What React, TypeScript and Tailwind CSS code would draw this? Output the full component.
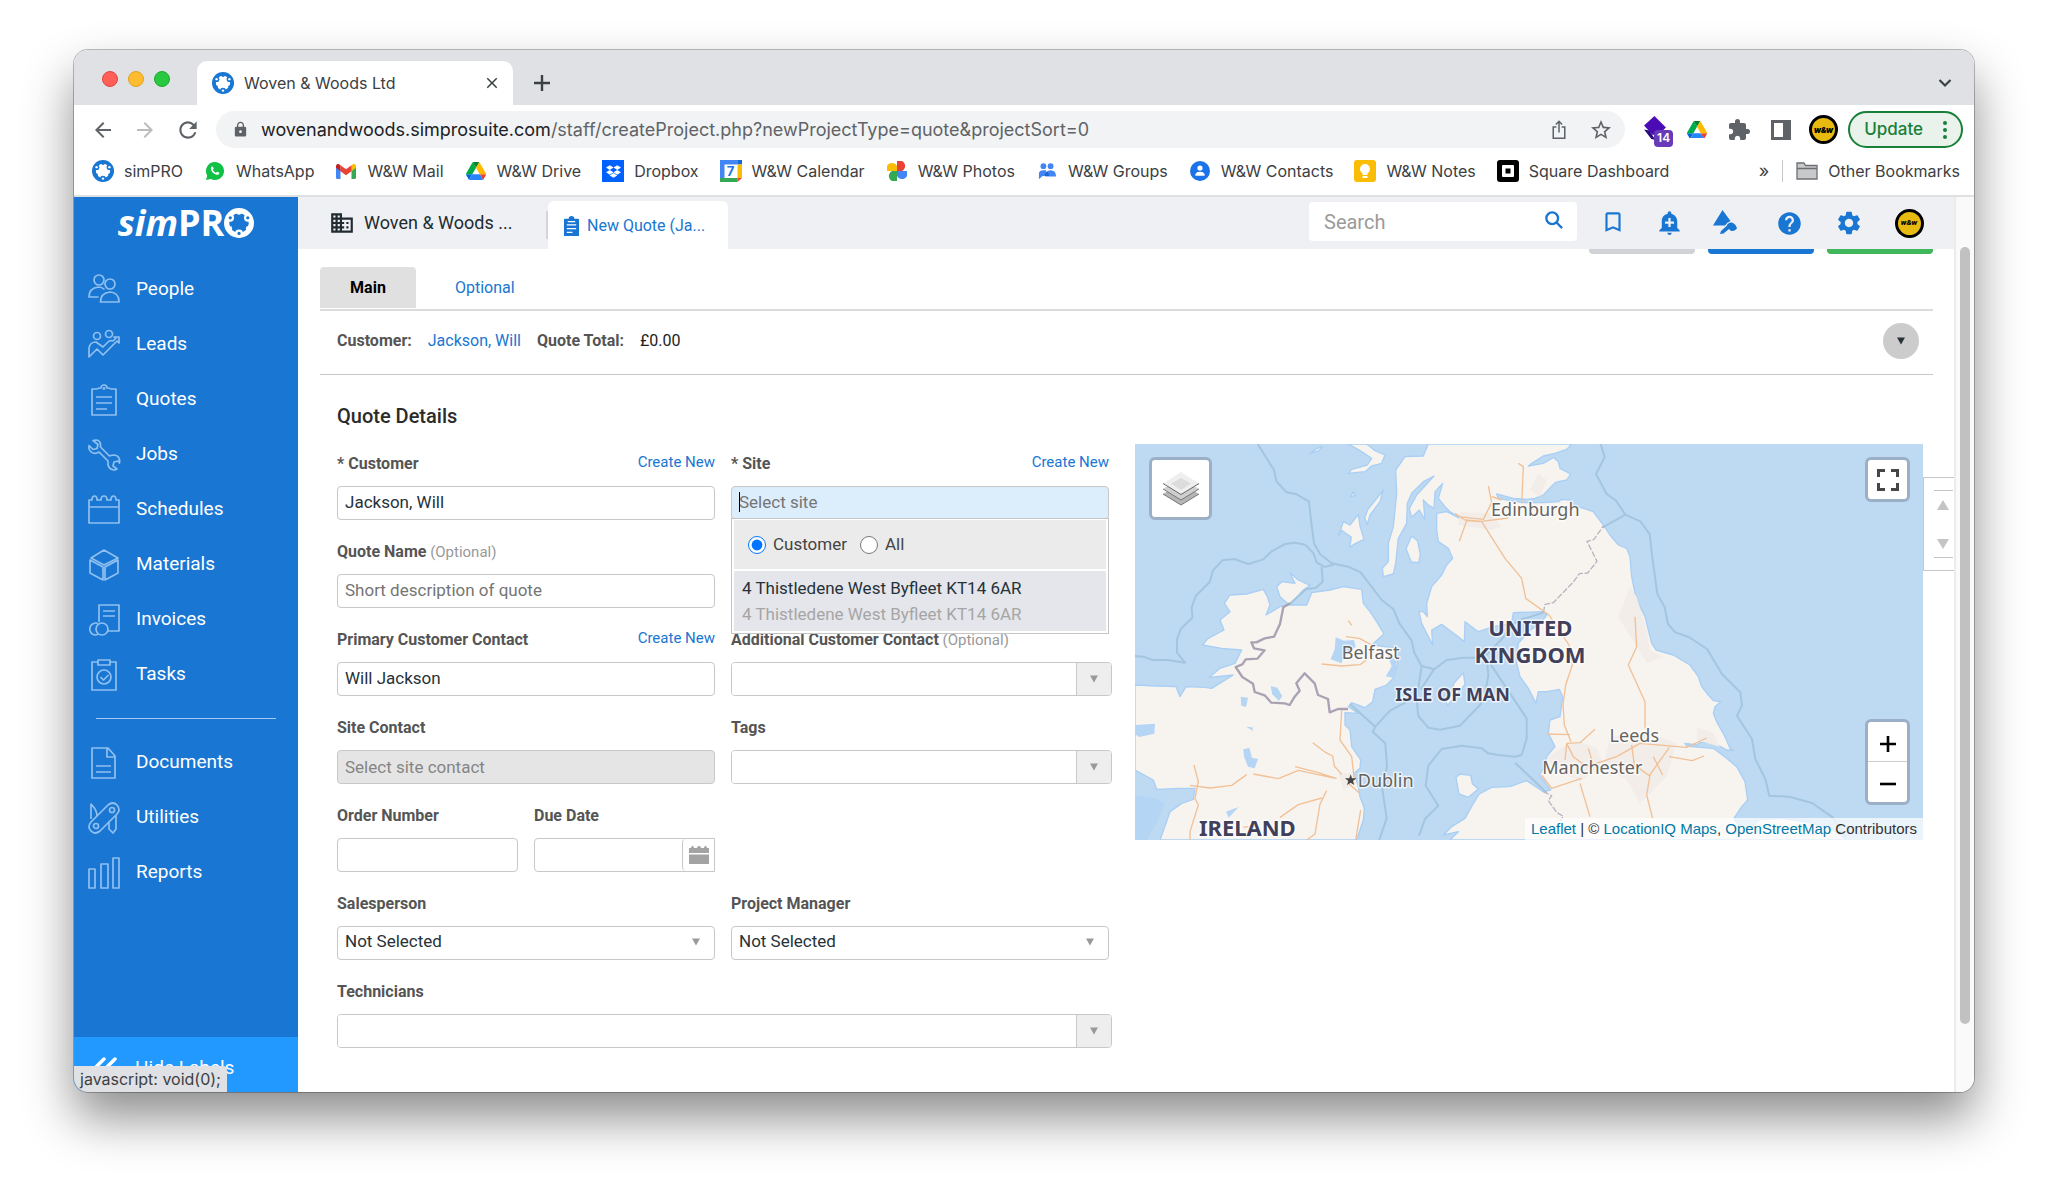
import { useState } from 'react';
import type { ReactNode } from 'react';
import { FaDropbox } from 'react-icons/fa';
import {
  MdAddAlert,
  MdArrowBack,
  MdArrowForward,
  MdBookmarkBorder,
  MdClose,
  MdDomain,
  MdExtension,
  MdHelp,
  MdLock,
  MdRefresh,
  MdSettings,
  MdStarBorder,
} from 'react-icons/md';

/* ---------- brand marks ---------- */

function SimproMark({ ring, core }: { ring: string; core: string }) {
  return (
    <svg viewBox="0 0 24 24" className="size-full" aria-hidden="true">
      <circle cx="12" cy="12" r="12" fill={ring} />
      <circle cx="12" cy="12" r="7.800" fill={core} />
      <g fill={ring}>
        <circle cx="4.800" cy="7.800" r="3.200" />
        <circle cx="19.200" cy="7.800" r="3.200" />
        <circle cx="12" cy="20.300" r="3.200" />
        <circle cx="12" cy="3.500" r="1.900" />
        <circle cx="4.600" cy="16.300" r="1.900" />
        <circle cx="19.400" cy="16.300" r="1.900" />
      </g>
      <g fill={core}>
        <circle cx="5" cy="7.800" r="1.300" />
        <circle cx="19" cy="7.800" r="1.300" />
        <circle cx="12" cy="20.300" r="1.300" />
      </g>
    </svg>
  );
}

const GmailMark = () => (
  <svg viewBox="0 0 20 15" className="w-5" aria-hidden="true">
    <path d="M0 2v11.500Q0 15 1.500 15H4.500V5z" fill="#4285f4" />
    <path d="M20 2v11.500Q20 15 18.500 15H15.500V5z" fill="#34a853" />
    <path d="M15.500 1.200V7.200L20 3.800V2Q19.500-.8 17 .2z" fill="#fbbc04" />
    <path d="M4.500 7.200V1.200L10 5.300l5.500-4.100v6L10 11.300z" fill="#ea4335" />
    <path d="M4.500 7.200V1.200L3 .2Q.5-.8 0 2v1.800z" fill="#c5221f" />
  </svg>
);

const DriveMark = () => (
  <svg viewBox="0 0 87 78" className="w-5" aria-hidden="true">
    <path d="M6.600 66.900l3.800 6.600c.8 1.400 2 2.500 3.300 3.300L27.500 53H0c0 1.500.4 3.100 1.200 4.500z" fill="#0066da" />
    <path d="M43.700 25L29.900 1.200c-1.300.8-2.500 1.900-3.300 3.300L1.200 48.500A9 9 0 000 53h27.500z" fill="#00ac47" />
    <path d="M73.600 76.800c1.300-.8 2.500-1.900 3.300-3.300L86.100 57.500c.8-1.400 1.200-3 1.200-4.500H59.800l5.900 11.500z" fill="#ea4335" />
    <path d="M43.700 25L57.400 1.200C56.100.4 54.500 0 52.900 0H34.400c-1.600 0-3.200.4-4.500 1.200z" fill="#00832d" />
    <path d="M59.800 53H27.500L13.700 76.800c1.300.8 2.900 1.200 4.500 1.200h50.900c1.600 0 3.200-.4 4.500-1.200z" fill="#2684fc" />
    <path d="M73.400 26.500L60.700 4.500c-.8-1.400-2-2.500-3.300-3.300L43.700 25l16.100 28h27.500c0-1.500-.4-3.100-1.200-4.500z" fill="#ffba00" />
  </svg>
);

const CalendarMark = () => (
  <span className="relative flex size-[22px] items-center justify-center bg-white text-[13px] font-bold leading-none text-[#1a73e8]">
    <svg viewBox="0 0 22 22" className="absolute inset-0" aria-hidden="true">
      <path d="M0 0h18v4.500H4.500V18H0z" fill="#4285f4" />
      <path d="M18 0h4v4.500h-4z" fill="#1967d2" />
      <path d="M17.500 4.500H22V18h-4.500z" fill="#fbbc04" />
      <path d="M0 18h17.500v4H0z" fill="#34a853" />
      <path d="M17.500 18H22l-4.500 4z" fill="#ea4335" />
    </svg>
    <span className="relative">7</span>
  </span>
);

const PhotosMark = () => (
  <svg viewBox="0 0 20 20" className="w-5" aria-hidden="true">
    <path d="M10 0v10h5A5 5 0 0010 0z" fill="#ea4335" />
    <path d="M20 10H10v5a5 5 0 0010-5z" fill="#4285f4" />
    <path d="M10 20V10H5a5 5 0 005 10z" fill="#34a853" />
    <path d="M0 10h10V5A5 5 0 000 10z" fill="#fbbc04" />
  </svg>
);

const GroupsMark = () => (
  <svg viewBox="0 0 20 18" className="w-[18px]" aria-hidden="true">
    <circle cx="6" cy="3.500" r="3.200" fill="#4285f4" />
    <circle cx="14" cy="3.500" r="3.200" fill="#4285f4" />
    <path d="M1 18v-6q0-4 5-4h3v6.500H5z" fill="#4285f4" />
    <path d="M8 15q0-7 6-7t6 7z" fill="#4285f4" />
    <path d="M7.500 14.500q.5-3.500 2.500-5 2 1.500 2.500 5z" fill="#1967d2" />
  </svg>
);

const ContactsMark = () => (
  <svg viewBox="0 0 20 20" className="w-5" aria-hidden="true">
    <circle cx="10" cy="10" r="10" fill="#1a73e8" />
    <circle cx="10" cy="7" r="2.600" fill="#fff" />
    <path d="M5.200 14.800q0-4 4.800-4t4.800 4z" fill="#fff" />
  </svg>
);

const NotesMark = () => (
  <svg viewBox="0 0 22 22" className="w-[22px]" aria-hidden="true">
    <rect width="22" height="22" rx="3" fill="#fbbc04" />
    <circle cx="11" cy="9" r="5" fill="#fff" />
    <path d="M8.500 12h5v3h-5zM8.500 16h5v2h-5z" fill="#fff" />
  </svg>
);

const SquareMark = () => (
  <svg viewBox="0 0 22 22" className="w-[22px]" aria-hidden="true">
    <rect width="22" height="22" rx="3" fill="#000" />
    <rect x="5" y="5" width="12" height="12" rx="1" fill="#fff" />
    <rect x="8.500" y="8.500" width="5" height="5" fill="#000" />
  </svg>
);

function Avatar() {
  return (
    <span className="flex size-[29px] items-center justify-center rounded-full border-3 border-black bg-[#e8b90e] text-[8px] font-black italic leading-none text-black">
      w&amp;w
    </span>
  );
}

/* ---------- browser chrome ---------- */

const bookmarks: { label: string; icon: ReactNode }[] = [
  { label: 'simPRO', icon: <span className="size-[22px]"><SimproMark ring="#1976d2" core="#fff" /></span> },
  {
    label: 'WhatsApp',
    icon: (
      <svg viewBox="0 0 18 18" className="w-[18px]" aria-hidden="true">
        <path d="M9 0a9 9 0 11-4.300 16.900L0 18l1.200-4.500A9 9 0 019 0z" fill="#0fc144" />
        <path d="M5.800 4.600c-2 1.500-.5 4.600 1.500 6.400s4.800 2.700 6 .6c.4-.8 0-1-2-1.900-.8 0-.8 1.200-1.600 1-1.300-.6-2.200-1.500-2.800-2.700 0-.7 1-1 .8-1.600-.7-1.700-.9-2-1.900-1.800z" fill="#fff" />
      </svg>
    ),
  },
  { label: 'W&W Mail', icon: <GmailMark /> },
  { label: 'W&W Drive', icon: <DriveMark /> },
  {
    label: 'Dropbox',
    icon: <span className="flex size-[22px] items-center justify-center bg-[#0061ff] text-white"><FaDropbox size={15} /></span>,
  },
  { label: 'W&W Calendar', icon: <CalendarMark /> },
  { label: 'W&W Photos', icon: <PhotosMark /> },
  { label: 'W&W Groups', icon: <GroupsMark /> },
  { label: 'W&W Contacts', icon: <ContactsMark /> },
  { label: 'W&W Notes', icon: <NotesMark /> },
  { label: 'Square Dashboard', icon: <SquareMark /> },
];

function TabStrip() {
  return (
    <div className="flex h-[55px] items-end bg-[#dfe1e5] pr-[22px]">
      <div className="flex h-full w-[123px] items-center gap-[10px] pl-7 pt-[2px]">
        <span className="size-4 rounded-full border border-[#e0443e] bg-[#ff5f57]" />
        <span className="size-4 rounded-full border border-[#dea123] bg-[#febc2e]" />
        <span className="size-4 rounded-full border border-[#1aab29] bg-[#28c840]" />
      </div>
      <div className="flex h-11 w-[316px] items-center rounded-t-[10px] bg-white pl-[15px] pr-3">
        <span className="size-[22px]"><SimproMark ring="#1976d2" core="#fff" /></span>
        <span className="ml-[10px] flex-1 text-base text-[#3c4043]">Woven &amp; Woods Ltd</span>
        <button aria-label="Close tab" className="text-[#3c4043]"><MdClose size={18} /></button>
      </div>
      <button aria-label="New tab" className="mb-[13px] ml-5 text-[#3c4043]">
        <svg viewBox="0 0 18 18" className="w-[18px]"><path d="M9 1v16M1 9h16" stroke="currentColor" strokeWidth="2.400" /></svg>
      </button>
      <button aria-label="Search tabs" className="mb-[17px] ml-auto text-[#3c4043]">
        <svg viewBox="0 0 14 10" className="w-[14px]"><path d="M1.500 2l5.500 5.500L12.500 2" fill="none" stroke="currentColor" strokeWidth="2.200" /></svg>
      </button>
    </div>
  );
}

function AddressBar() {
  return (
    <div className="flex h-[49px] items-center bg-white pl-[17px] pr-[11px] text-[#5f6368]">
      <button aria-label="Back"><MdArrowBack size={24} /></button>
      <button aria-label="Forward" className="ml-[18px] text-[#babcbe]"><MdArrowForward size={24} /></button>
      <button aria-label="Reload" className="ml-[18px]"><MdRefresh size={26} /></button>
      <div className="ml-[15px] flex h-[37px] flex-1 items-center rounded-full bg-[#f1f3f4] pl-4 pr-3">
        <MdLock size={17} />
        <span className="ml-3 flex-1 text-lg">
          <span className="text-[#202124]">wovenandwoods.simprosuite.com</span>/staff/createProject.php?newProjectType=quote&amp;projectSort=0
        </span>
        <button aria-label="Share" className="mr-[22px]">
          <svg viewBox="0 0 18 22" className="w-4" fill="none" stroke="currentColor" strokeWidth="1.700">
            <path d="M6 8H2.500v12.500h13V8H12M9 14V2M5.500 5L9 1.500 12.500 5" />
          </svg>
        </button>
        <button aria-label="Bookmark this tab"><MdStarBorder size={24} /></button>
      </div>
      <span className="relative ml-[18px] mr-4 size-7">
        <svg viewBox="0 0 24 24" className="w-[25px]" aria-hidden="true">
          <path d="M11 0l11 11-7 7H9L1 9z" fill="#4b0bb5" />
          <path d="M1 13l5 1 6 9-4-1z" fill="#2b0a80" />
        </svg>
        <span className="absolute left-[11px] top-[14px] flex h-[17px] w-[19px] items-center justify-center rounded-sm bg-[#673ab7] text-xs font-semibold text-white">14</span>
      </span>
      <DriveMark />
      <MdExtension size={24} className="ml-5" />
      <svg viewBox="0 0 20 20" className="ml-5 w-5" aria-hidden="true">
        <path d="M1.500 1.500h17v17h-17z" fill="none" stroke="currentColor" strokeWidth="3" />
        <path d="M12 0h8v20h-8z" fill="currentColor" />
      </svg>
      <span className="ml-[18px]"><Avatar /></span>
      <button className="ml-[10px] flex h-[37px] items-center gap-5 rounded-full border-2 border-[#188038] bg-[#e9f3ec] pl-[14px] pr-[14px] text-[17px] font-medium text-[#188038]">
        Update
        <svg viewBox="0 0 4 18" className="w-1" fill="currentColor"><circle cx="2" cy="2" r="2" /><circle cx="2" cy="9" r="2" /><circle cx="2" cy="16" r="2" /></svg>
      </button>
    </div>
  );
}

function BookmarkBar() {
  return (
    <nav className="flex h-[43px] items-center border-b-2 border-[#dfe0e2] bg-white pb-[7px] pl-[18px] pr-[14px] text-base text-[#3c4043]">
      <div className="flex flex-1 items-center gap-[21px]">
        {bookmarks.map((b) => (
          <a key={b.label} href="#" className="flex items-center gap-[10px] whitespace-nowrap">
            <span className="flex w-[22px] justify-center">{b.icon}</span>
            {b.label}
          </a>
        ))}
      </div>
      <button aria-label="More bookmarks" className="text-lg">»</button>
      <span className="mx-[13px] h-[22px] w-px bg-[#c4c7ca]" />
      <a href="#" className="flex items-center gap-[10px] whitespace-nowrap">
        <svg viewBox="0 0 22 18" className="w-[22px]" aria-hidden="true">
          <path d="M1 17V1h7l1.500 2.500H21V17z" fill="#c8c9cb" stroke="#6c6f73" strokeWidth="1.300" />
          <path d="M1 6.500h20" stroke="#6c6f73" strokeWidth="1.300" />
        </svg>
        Other Bookmarks
      </a>
    </nav>
  );
}

/* ---------- app sidebar ---------- */

const icons: Record<string, ReactNode> = {
  People: (
    <>
      <circle cx="11" cy="6" r="5" />
      <circle cx="22" cy="10" r="5" />
      <path d="M10.500 23H1q0-9 9.500-10 3.500 0 6 2.500M12.500 28q0-9 9.500-10 9 .5 9 10z" />
    </>
  ),
  Leads: (
    <>
      <circle cx="9" cy="7" r="3.500" />
      <circle cx="21" cy="5" r="3.500" />
      <path d="M1 28V19q1-6 7-6l7 5 5-5q2-2 5-1l3-3-2-1h5v6l-2-2-14 14-6-6z" />
    </>
  ),
  Quotes: (
    <>
      <path d="M4 5h5q1-1 4-1 0-3 3-3t3 3q3 0 4 1h5v26H4zM8 13h16M8 19h16M8 25h11" />
      <circle cx="16" cy="4.500" r=".6" />
    </>
  ),
  Jobs: <path d="M5 1.500l5 4-1 4-4 1-4-4Q0 12 5 14q3 1 6-1l9 9q-1 8 6 9 2 0 3-1l-4-3 1-4 4-1 1.500 2q1-7-5-8-3 0-5 1l-9-9Q13 1 8 1z" />,
  Schedules: <path d="M1 6h3q0-4 2.500-4T9 6h4q0-4 3-4t3 4h4q0-4 2.500-4T28 6h3v23H1zM1 13h30" />,
  Materials: <path d="M16 1l14 8-14 7L3 9zM2 11l13 7v13L2 24zM30 11l-13 7v13l13-7z" />,
  Invoices: (
    <>
      <path d="M11 18V1h20v26H20M15 7h12M15 12h12" />
      <path d="M10 19.500A6 6 0 107 31q2 0 3-1" />
      <circle cx="14" cy="25" r="6" />
    </>
  ),
  Tasks: (
    <>
      <path d="M10 3H4v28h24V3h-6M10 1h12v5H10z" />
      <circle cx="16" cy="18" r="7" />
      <path d="M12.500 18l3 3 5-5" />
    </>
  ),
  Documents: <path d="M4 1h16l7 8v22H4zM19 1v9h8M8 19h15M8 25h15" />,
  Utilities: (
    <>
      <path d="M3 20L20 3q5-4 9 0 4 5 0 9L12 29q-5 4-9 0-4-4 0-9zM3 17V2q6 6 6 12M21 19v8l4 4 3-4V13" />
      <circle cx="24" cy="8" r="2.500" />
      <circle cx="8" cy="24" r="2.500" />
    </>
  ),
  Reports: <path d="M1 12h6v19H1zM13 7h7v24h-7zM25 1h6v30h-6z" />,
};

function NavItem({ label }: { label: string }) {
  return (
    <a href="#" className="flex h-[55px] items-center gap-4 pl-[14px] text-[19px] text-white">
      <svg viewBox="0 0 32 32" className="size-8 overflow-visible" fill="none" stroke="#8fc0f0" strokeWidth="1.700" strokeLinejoin="round" aria-hidden="true">
        {icons[label]}
      </svg>
      {label}
    </a>
  );
}

function Sidebar() {
  return (
    <aside className="flex w-[224px] shrink-0 flex-col bg-[#1976d2] font-[Roboto,sans-serif]">
      <div className="flex h-[65px] items-start justify-center pt-[5px]">
        <div className="flex items-center font-['Open_Sans',sans-serif] text-[36px] font-bold leading-[42px] text-white">
          <span><i>sim</i>PR</span>
          <span className="size-[30px]"><SimproMark ring="#fff" core="#1976d2" /></span>
        </div>
      </div>
      <nav>
        {['People', 'Leads', 'Quotes', 'Jobs', 'Schedules', 'Materials', 'Invoices', 'Tasks'].map((l) => (
          <NavItem key={l} label={l} />
        ))}
        <hr className="mx-[22px] my-4 border-[#a3cbf2]" />
        {['Documents', 'Utilities', 'Reports'].map((l) => (
          <NavItem key={l} label={l} />
        ))}
      </nav>
      <button className="mt-auto flex h-[55px] items-center gap-4 bg-[#2299ff] pb-3 pl-[17px] pt-5 text-[19px] text-white">
        <svg viewBox="0 0 28 24" className="w-7" fill="none" stroke="#fff" strokeWidth="3.500" strokeLinecap="round" aria-hidden="true">
          <path d="M13 2L3 12l10 10M24 2L14 12l10 10" />
        </svg>
        Hide Labels
      </button>
    </aside>
  );
}

/* ---------- app header ---------- */

function Header() {
  return (
    <header className="flex h-[52px] items-start bg-[#eff0f3] pr-[15px] text-[#1976d2]">
      <a href="#" className="flex h-[52px] w-[248px] items-center gap-[9px] pl-[31px] text-lg text-[#212b30]">
        <MdDomain size={26} />
        Woven &amp; Woods ...
      </a>
      <span className="mt-[14px] h-7 w-[2px] bg-[#d3d5d9]" />
      <a href="#" className="mt-1 flex h-12 w-[180px] items-center gap-2 rounded-t-md bg-white pl-4 pt-[2px] text-base">
        <svg viewBox="0 0 16 22" className="w-[15px]" aria-hidden="true">
          <path d="M1 3h4a3 3 0 016 0h4q1 0 1 1v17q0 1-1 1H1q-1 0-1-1V4q0-1 1-1z" fill="#1976d2" />
          <path d="M3 9.500h10M3 13.500h10M3 17.500h6M4 6h8" stroke="#fff" strokeWidth="1.500" />
        </svg>
        New Quote (Ja...
      </a>
      <label className="ml-auto mr-2 mt-[5px] flex h-[39px] w-[268px] items-center rounded bg-white pl-[15px] pr-[10px]">
        <input aria-label="Search" placeholder="Search" className="w-full min-w-0 flex-1 text-xl outline-none placeholder:text-[#9a9a9a]" />
        <svg viewBox="0 0 20 20" className="mb-1 mr-1 w-[18px]" fill="none" stroke="currentColor" strokeWidth="2.600" aria-hidden="true">
          <circle cx="8" cy="8" r="6.500" />
          <path d="M12.800 12.800L19 19" />
        </svg>
      </label>
      {[
        { name: 'Bookmarks', icon: <MdBookmarkBorder size={26} /> },
        { name: 'Notifications', icon: <MdAddAlert size={27} /> },
        {
          name: 'Feedback',
          icon: (
            <svg viewBox="0 0 24 24" className="w-6" fill="currentColor">
              <path d="M9.500 0l8 11q-3.500 1-5.500 4.500H0z" />
              <path d="M13.500 16q1.500-4 5.500-3.500 4 1.500 5 6-2.500 3-6 2.500l-2-2-5.500 4.500-3.500.5 1-3z" />
            </svg>
          ),
        },
      ].map((i) => (
        <button key={i.name} aria-label={i.name} className="flex h-[50px] w-14 items-center justify-center">{i.icon}</button>
      ))}
      <div className="ml-[6px] flex">
        {[
          { name: 'Help', icon: <MdHelp size={27} /> },
          { name: 'Settings', icon: <MdSettings size={28} /> },
          { name: 'Account', icon: <Avatar /> },
        ].map((i) => (
          <button key={i.name} aria-label={i.name} className="flex h-[52px] w-[60px] items-center justify-center">{i.icon}</button>
        ))}
      </div>
    </header>
  );
}

/* ---------- form ---------- */

const box = 'h-[34px] w-full rounded border border-[#c8c8c8] bg-white px-[7px] pb-[2px] text-[17px] text-[#263238] outline-none placeholder:text-[#757575]';

function Field(props: { id: string; label: string; optional?: boolean; create?: boolean; children: ReactNode; className?: string }) {
  return (
    <div className={props.className}>
      <div className="flex h-[54px] items-start justify-between pt-5 text-base leading-6">
        <label htmlFor={props.id} className="whitespace-nowrap font-bold text-[#555]">
          {props.label}
          {props.optional && <span className="text-[15px] font-normal text-[#999]"> (Optional)</span>}
        </label>
        {props.create && <a href="#" className="text-[15px] leading-5 text-[#1976d2]">Create New</a>}
      </div>
      {props.children}
    </div>
  );
}

function Combo({ id }: { id: string }) {
  return (
    <div className="-mr-[3px] flex h-[34px] overflow-hidden rounded border border-[#c8c8c8]">
      <input id={id} className="min-w-0 flex-1 bg-white px-[7px] text-[17px] outline-none" />
      <button type="button" aria-label={`Open ${id}`} className="flex w-[35px] items-center justify-center border-l border-[#c8c8c8] bg-[#eee] text-[#999]">
        <Triangle />
      </button>
    </div>
  );
}

function Triangle() {
  return (
    <svg viewBox="0 0 8 8" className="w-2" fill="currentColor" aria-hidden="true">
      <path d="M0 .5h8L4 7.500z" />
    </svg>
  );
}

function Picker({ id }: { id: string }) {
  return (
    <div className="relative">
      <select id={id} className={`${box} appearance-none`}>
        <option>Not Selected</option>
      </select>
      <span className="pointer-events-none absolute right-[15px] top-3 text-[#999]"><Triangle /></span>
    </div>
  );
}

const siteName = '4 Thistledene West Byfleet KT14 6AR';

function SiteField() {
  const [scope, setScope] = useState('Customer');

  return (
    <Field id="site" label="* Site" create>
      <div className="relative">
        <input
          id="site"
          placeholder="Select site"
          className="h-[34px] w-full rounded border border-[#c8c8c8] bg-[#dceefc] px-[7px] pb-[2px] text-[17px] outline-none placeholder:text-[#757575]"
        />
        <span className="absolute left-2 top-[6px] h-5 w-px bg-black" />
        <div className="absolute left-0 right-0 top-8 z-10 border border-[#c4c4c4] bg-white px-[2px] pb-[2px] pt-px">
          <div className="flex h-[49px] items-center gap-[13px] bg-[#ebebeb] pl-[14px] text-[17px] text-[#444]">
            {['Customer', 'All'].map((s) => (
              <label key={s} className="flex items-center gap-[7px]">
                <input
                  type="radio"
                  name="scope"
                  checked={scope === s}
                  onChange={() => setScope(s)}
                  className="size-[18px] accent-[#0075ff]"
                />
                {s}
              </label>
            ))}
          </div>
          <button type="button" className="mt-[2px] block h-[60px] w-full bg-[#e5e6eb] px-2 text-left text-[17px] leading-[26px] text-[#263238]">
            {siteName}
            <span className="block text-[#a5a5a5]">{siteName}</span>
          </button>
        </div>
      </div>
    </Field>
  );
}

function QuoteForm() {
  return (
    <form className="grid grid-cols-2 content-start gap-x-4">
      <h2 className="col-span-2 h-[57px] pt-7 text-xl font-medium leading-[26px] text-[#2b2b2b]">Quote Details</h2>
      <Field id="customer" label="* Customer" create>
        <input id="customer" className={box} defaultValue="Jackson, Will" />
      </Field>
      <SiteField />
      <Field id="quoteName" label="Quote Name" optional>
        <input id="quoteName" className={box} placeholder="Short description of quote" />
      </Field>
      <span />
      <Field id="primaryContact" label="Primary Customer Contact" create>
        <input id="primaryContact" className={box} defaultValue="Will Jackson" />
      </Field>
      <Field id="additionalContact" label="Additional Customer Contact" optional>
        <Combo id="additionalContact" />
      </Field>
      <Field id="siteContact" label="Site Contact">
        <input
          id="siteContact"
          disabled
          placeholder="Select site contact"
          className="h-[34px] w-full rounded border border-[#c8c8c8] bg-[#e5e5e5] px-[7px] text-[17px] placeholder:text-[#858585]"
        />
      </Field>
      <Field id="tags" label="Tags">
        <Combo id="tags" />
      </Field>
      <div className="grid grid-cols-2 gap-4">
        <Field id="orderNumber" label="Order Number">
          <input id="orderNumber" className={box} />
        </Field>
        <Field id="dueDate" label="Due Date">
          <div className="flex h-[34px] rounded-l border border-[#c8c8c8]">
            <input id="dueDate" className="min-w-0 flex-1 rounded-l px-[7px] text-[17px] outline-none" />
            <button type="button" aria-label="Pick a date" className="flex w-8 items-center justify-center rounded-l border-l border-[#c8c8c8]">
              <svg viewBox="0 0 20 18" className="w-5" fill="#a3a3a3" aria-hidden="true">
                <path d="M0 2h2q0-2 1.500-2T5 2h3q0-2 2-2t2 2h3q0-2 1.500-2T18 2h2v5H0zM0 8.500h20V18H0z" />
              </svg>
            </button>
          </div>
        </Field>
      </div>
      <span />
      <Field id="salesperson" label="Salesperson"><Picker id="salesperson" /></Field>
      <Field id="projectManager" label="Project Manager"><Picker id="projectManager" /></Field>
      <Field id="technicians" label="Technicians" className="col-span-2"><Combo id="technicians" /></Field>
    </form>
  );
}

/* ---------- map ---------- */

const land = [
  // Great Britain, clockwise from the Firth of Lorn
  'M895 42L1325 42 1310 58 1290 65 1275 70 1240 78 1205 100 1195 108 1240 100 1270 82 1285 95 1290 115 1322 132 1310 150 1285 155 1275 158 1240 195 1215 205 1190 208 1150 205 1100 192 1105 205 1140 212 1180 218 1240 218 1285 215 1295 208 1320 210 1330 225 1390 245 1420 285 1440 315 1465 345 1490 355 1500 380 1505 440 1515 490 1530 530 1545 560 1555 600 1565 640 1578 660 1630 675 1680 705 1705 740 1715 770 1735 795 1750 812 1772 815 1755 830 1750 850 1760 875 1785 920 1800 955 1810 962 1790 960 1745 935 1710 938 1700 945 1665 940 1670 948 1710 952 1750 955 1790 985 1820 1010 1845 1055 1853 1110 1835 1130 1812 1165 1825 1185 1860 1195 1890 1168 1960 1165 2050 1180 2110 1200 2150 1230 960 1230 985 1205 940 1215 965 1190 1005 1165 1030 1120 1048 1092 1085 1072 1140 1070 1190 1052 1240 1085 1262 1080 1240 1050 1228 1035 1245 1010 1250 980 1275 950 1255 910 1260 870 1290 860 1298 800 1288 778 1250 785 1225 785 1218 820 1195 775 1170 740 1160 700 1165 640 1195 605 1235 575 1250 555 1240 545 1150 548 1145 580 1090 590 1045 605 1005 575 1003 635 985 620 935 583 905 600 908 645 890 610 875 580 867 545 880 545 892 560 890 520 905 470 935 435 950 405 968 385 955 355 925 335 920 300 920 250 950 245 990 265 960 245 945 230 925 205 938 160 915 185 912 235 895 225 880 210 885 270 868 240 845 262 838 235 860 195 912 138 880 155 845 190 832 220 830 280 805 325 797 400 790 432 760 440 757 415 775 395 775 340 790 290 795 240 800 190 797 120 825 80 880 78 895 42z',
  // Ireland
  'M480 428L505 450 540 466 520 480 480 525 530 525 545 488 600 480 640 470 695 478 700 520 720 545 740 575 762 612 725 645 765 650 795 655 803 700 790 745 770 765 735 778 728 815 705 833 665 818 655 830 685 850 645 848 645 885 660 900 665 950 692 990 690 1015 672 1030 685 1070 690 1100 703 1135 700 1170 680 1230 90 1230 108 1180 120 1145 155 1120 190 1108 195 1075 150 1075 80 1078 70 1050 15 1020 15 765 80 768 138 770 150 800 168 770 225 772 245 775 310 735 238 742 270 715 315 700 335 660 275 655 217 645 235 625 282 600 270 570 300 545 283 520 300 495 350 492 400 478 412 500 420 525 408 555 450 530 478 525 450 500 440 470 455 455 495 460z',
  // Hebrides, Arran, Man, Anglesey
  'M655 42L710 42 735 62 765 75 755 100 725 108 705 125 655 130 665 118 712 105 725 85 690 62z',
  'M540 70l20-14 18-6-12 12z',
  'M640 275l20 10 25-32 5 35 12 40-25 12-18 12 5-30-30-22-8 18z',
  'M760 180l-10 35-30 40-8 28-8-20 10-25 20-25z',
  'M845 318l18 15 8 40-5 25-22-2-16-40z',
  'M1000 728l5 35-20 25-32 38-5-10 15-25 8-30z',
  'M978 1042l12-10 32 4 5 25 18 16-30 25-28-10z',
  'M670 185l-8 15 14-4z',
];

const lakes = [
  'M617 622l25 10 30-2 5 20-35 30-8 20-32-12 12-30z',
  'M422 768l20 5 15 25-10 15-20-20z',
  'M332 800l22 3-6 28-14-4z',
  'M340 958l18-5 8 30 18 4-10 28-20-5-12-30z',
  'M288 1145l38-14-30 32z',
  'M348 890l20 2v10z',
  'M15 885l60-4-2 30-45 10-13-8z',
  'M15 1095l60 10 30 15-25 60-30 50H15z',
  'M765 655l35 40-5 50-28-6 18-30z',
];

const seaLines = [
  'M383 42L432 120 440 155 470 187 500 193 537 215 543 270 552 340 570 372 605 400 655 410 692 427 755 510 790 537 808 580 845 632 853 668 875 708 912 718 950 690 1000 683 1060 683',
  'M15 678l25 2 28 10 45 0 52 8-24-30 0-40 12-32 34-33-2-30 12-35 42-42 10-35 28-30 36-4 42 15 45-14 25-24 40-22 30-4 30 6 25 25 10 28 24 14 30-8M575 410l3 45-20 18-30 5-50 45',
  'M660 822l76 68 44-48 80-42M736 890l-8 15 38 35 5 70-15 60 14 95-24 70M875 708l-15 100 5 50 30 35 35 6 60-12 60-62 15-30 10-60-5-50 120 180 0 60-15 50-20 5-50-5-30-5-20-15-60-8-60 10-40 50-8 60 38 60-40 40-18 50M1155 998l95 90M912 718l-40 60',
  'M1412 42l12 40-26 50 32 60 28 20 28 42-68 38M1486 254l45 20 28 38 8 70 15 110 22 40 10 50 22 25 40 14 55 36 45 75 55 55 5 40-15 30 45 70 10 60 30 60 12 50 60 3 70 20 60 42 40 60',
  'M1060 683l50-50 50-60 80-25',
];

const borders = [
  'M480 520l-20 12-10 50-18 38-28 5-25 12-15 0 8 18 32 6-22 25-35 2-10 15-20 8 20 30 32 20 5 25 30 10 20 22 40 2 15 5 15-25 15-18-10-22 25-30 30 30 10 35 30 12 5 40 25-10 30 0',
];

const dashed = [
  'M1240 548l5-25 25-5 60-62 18-25 25-2 28-35-30-60 20-5 30-42',
  'M1240 1085l25 12-10 15 25 35 20 12-10 15',
];

const roads = [
  'M192 1005l13 50-10 50 10 20-25 80 0 25M180 1066l60 8 65-8 45-32M370 1032l75 14 60-25 115 25M495 1010l70 18 55 18M548 938l40 30 20 10 5 30 22 25M635 840l-5 90 35 50 8 70M655 1060l32 28M692 1140l-15 90M590 1082l-20 40-15 90-25 18M575 1104l-70 20-55 38M340 1192l40-6',
  'M575 702l60 6 55-4 20-15M648 620l40 5 40 22M655 572l10 14',
  'M1165 100l15 10-5 110M1075 168l10 50-25 50-75-8M1085 200l30 10M975 250l30 20 50 4 80-10M1050 275l-40-3-22 62M1055 275l70 110 50 60 12 60 70 50 60 90 10 60-20 60-8 60 4 60 20 50M1250 912l70 2M1310 940l40-2 45-40M1305 990l5-50 20 40 40 30 90-30 70-40 140 12 60-28M1515 560l5 90-25 55 50 110 0 80M1505 945l8 60 45 32 60-85M1617 980l70 12 35-14M1570 980l28 55M1560 1035l-10 60 18 70M1235 1035l30 40 90-30M1350 1060l30 100M1375 955l15 50',
];

const urban = [
  'M990 245l90 5 35 40-30 10-100-15zM1225 130l25 20-20 50-30-20zM1500 470l20 30 30 100 10 60 40 20-50 20-30-50-55-90z',
  'M1250 985l40-30 60-20 50 20 20 50-70 50-60-30zM1440 920l120-10 80 30-30 100-80 80-40-70-70-40zM1700 890l50 20 20 40-70-20zM625 1030l45 0 10 30-40 20z',
];

const places: { name: string; x: number; y: number; big?: number }[] = [
  { name: 'Edinburgh', x: 1216, y: 259 },
  { name: 'Belfast', x: 722, y: 688 },
  { name: 'Dublin', x: 767, y: 1070 },
  { name: 'Leeds', x: 1513, y: 935 },
  { name: 'Manchester', x: 1387, y: 1031 },
  { name: 'UNITED', x: 1201, y: 617, big: 66 },
  { name: 'KINGDOM', x: 1200, y: 699, big: 66 },
  { name: 'ISLE OF MAN', x: 968, y: 812, big: 54 },
  { name: 'IRELAND', x: 352, y: 1218, big: 66 },
];

function SiteMap() {
  return (
    <div className="relative mt-[69px] h-[396px] overflow-hidden bg-[#bed9f2]">
      {/* map units are a third of a pixel */}
      <svg viewBox="15 42 2364 1188" preserveAspectRatio="xMidYMid slice" className="size-full" fill="none" strokeLinejoin="round">
        <g fill="#f7f4ef" stroke="#a9cff5" strokeWidth="4">
          {land.map((d) => <path key={d} d={d} />)}
        </g>
        <g fill="#f2ede9">{urban.map((d) => <path key={d} d={d} />)}</g>
        <g fill="#b5d5f5">{lakes.map((d) => <path key={d} d={d} />)}</g>
        <g stroke="#a3c6de" strokeWidth="6">{seaLines.map((d) => <path key={d} d={d} />)}</g>
        <g stroke="#a9a2b4" strokeWidth="7">{borders.map((d) => <path key={d} d={d} />)}</g>
        <g stroke="#b9b3c0" strokeWidth="4" strokeDasharray="18 5">{dashed.map((d) => <path key={d} d={d} />)}</g>
        <g stroke="#f1c096" strokeWidth="4">{roads.map((d) => <path key={d} d={d} />)}</g>
        <path d="M662 1033l4 12h13l-10 8 4 12-11-7-11 7 4-12-10-8h13z" fill="#444" />
        <g textAnchor="middle" paintOrder="stroke" stroke="#fff" strokeOpacity=".7" strokeWidth="9" fontFamily="'Noto Sans', sans-serif">
          {places.map((p) => (
            <text key={p.name} x={p.x} y={p.y} fontSize={p.big ?? 54} fontWeight={p.big ? 700 : 400} fill={p.big ? '#41405a' : '#66645f'}>
              {p.name}
            </text>
          ))}
        </g>
      </svg>

      <button aria-label="Layers" className="absolute left-[14px] top-[13px] flex size-[63px] items-center justify-center rounded-md border-3 border-[#9bb0c6] bg-white">
        <svg viewBox="0 0 36 34" className="w-9">
          <path d="M0 22l18-11 18 11-18 11z" fill="#b5b5b5" />
          <path d="M0 22l18 11 18-11" fill="none" stroke="#777" />
          <path d="M0 17l18-11 18 11-18 11z" fill="#cfcfcf" />
          <path d="M0 17l18 11 18-11" fill="none" stroke="#777" />
          <path d="M0 11.500L18 0l18 11.500-18 11z" fill="#efefef" />
          <path d="M8 11.500L18 6l10 5.500-10 6.500z" fill="#dcdcdc" />
          <path d="M0 11.500l18 11 18-11" fill="none" stroke="#666" />
        </svg>
      </button>
      <button aria-label="Full screen" className="absolute right-[13px] top-[13px] flex size-[45px] items-center justify-center rounded-md border-3 border-[#9bb0c6] bg-white">
        <svg viewBox="0 0 22 22" className="w-[22px]" fill="none" stroke="#464646" strokeWidth="3">
          <path d="M1.500 8V1.500H8M14 1.500h6.500V8M20.500 14v6.500H14M8 20.500H1.500V14" />
        </svg>
      </button>
      <div className="absolute bottom-[35px] right-[13px] w-[45px] divide-y divide-[#ccc] rounded-md border-3 border-[#9bb0c6] bg-white text-black">
        <button aria-label="Zoom in" className="flex h-10 w-full items-center justify-center pt-1">
          <svg viewBox="0 0 16 16" className="w-4"><path d="M8 0v16M0 8h16" stroke="currentColor" strokeWidth="2.600" /></svg>
        </button>
        <button aria-label="Zoom out" className="flex h-10 w-full items-center justify-center pt-1">
          <svg viewBox="0 0 16 16" className="w-4"><path d="M0 8h16" stroke="currentColor" strokeWidth="2.600" /></svg>
        </button>
      </div>
      <p className="absolute bottom-0 right-0 h-[22px] bg-white/70 px-[6px] font-['Liberation_Sans',Arial,sans-serif] text-[15px] leading-[22px] text-[#333]">
        <a href="#" className="text-[#0078a8]">Leaflet</a> | © <a href="#" className="text-[#0078a8]">LocationIQ Maps</a>,{' '}
        <a href="#" className="text-[#0078a8]">OpenStreetMap</a> Contributors
      </p>
    </div>
  );
}

/* ---------- page ---------- */

function QuotePage() {
  return (
    <main className="relative flex-1 bg-white pl-[22px] pr-[21px]">
      {/* toolbar scrolled up behind the header */}
      <div className="flex h-[18px] items-start justify-end gap-[13px]">
        <button aria-label="Cancel" className="h-[5px] w-[106px] rounded-b bg-[#d0d2d5]" />
        <button aria-label="Save" className="h-[5px] w-[106px] rounded-b bg-[#1976d2]" />
        <button aria-label="Save and finish" className="h-[5px] w-[106px] rounded-b bg-[#3fb75a]" />
      </div>
      <nav className="flex border-b-2 border-[#dcdcdc] pb-px text-base">
        <a href="#" className="flex h-[41px] w-24 items-center justify-center rounded-t bg-[#e0e0e0] font-bold text-black">Main</a>
        <a href="#" className="flex h-[41px] items-center px-[39px] text-[#1976d2]">Optional</a>
      </nav>
      <div className="flex h-16 items-center border-b border-[#c8c8c8] pb-1 pl-[17px] pr-[14px] text-base text-[#222]">
        <b className="text-[#555]">Customer:</b>
        <a href="#" className="ml-4 text-[#1976d2]">Jackson, Will</a>
        <b className="ml-4 text-[#555]">Quote Total:</b>
        <span className="ml-4">£0.00</span>
        <button aria-label="Show summary" className="ml-auto flex size-9 items-center justify-center rounded-full bg-[#ccc] text-[#263238]">
          <Triangle />
        </button>
      </div>
      <div className="grid grid-cols-[minmax(0,772fr)_minmax(0,788fr)] gap-[26px] pl-[17px] pr-[10px]">
        <QuoteForm />
        <SiteMap />
      </div>
      <div className="absolute right-0 top-[228px] flex h-[94px] w-[31px] flex-col items-center justify-between border border-r-0 border-[#c8c8c8] bg-white py-3 pl-2 text-[#c4c4c4]">
        <span className="h-px w-[19px] bg-current" />
        <button aria-label="Scroll up"><svg viewBox="0 0 12 10" className="w-3" fill="currentColor"><path d="M6 0l6 10H0z" /></svg></button>
        <span className="h-3" />
        <button aria-label="Scroll down"><svg viewBox="0 0 12 10" className="w-3" fill="currentColor"><path d="M0 0h12L6 10z" /></svg></button>
        <span className="h-px w-[19px] bg-current" />
      </div>
    </main>
  );
}

export default function App() {
  return (
    <div className="flex min-h-screen bg-white px-[74px] pb-[98px] pt-[50px] font-[Inter,sans-serif]">
      <div className="relative flex min-w-0 flex-1 flex-col overflow-hidden rounded-[14px] shadow-[0_0_0_1px_rgba(0,0,0,0.25),0_26px_50px_rgba(0,0,0,0.45)]">
        <TabStrip />
        <AddressBar />
        <BookmarkBar />
        <div className="flex flex-1">
          <Sidebar />
          <div className="flex min-w-0 flex-1 flex-col font-[Roboto,sans-serif]">
            <Header />
            <QuotePage />
          </div>
          <div className="w-5 border-l-2 border-[#ebebeb] bg-[#fafafa] pl-1 pt-[50px]">
            <div className="h-[777px] w-[10px] rounded-full bg-[#c1c1c1]" />
          </div>
        </div>
        <span className="absolute bottom-0 left-0 h-[26px] rounded-tr bg-[#dfe1e5] px-[6px] text-base leading-[26px] text-[#3c4043]">
          javascript: void(0);
        </span>
      </div>
    </div>
  );
}
